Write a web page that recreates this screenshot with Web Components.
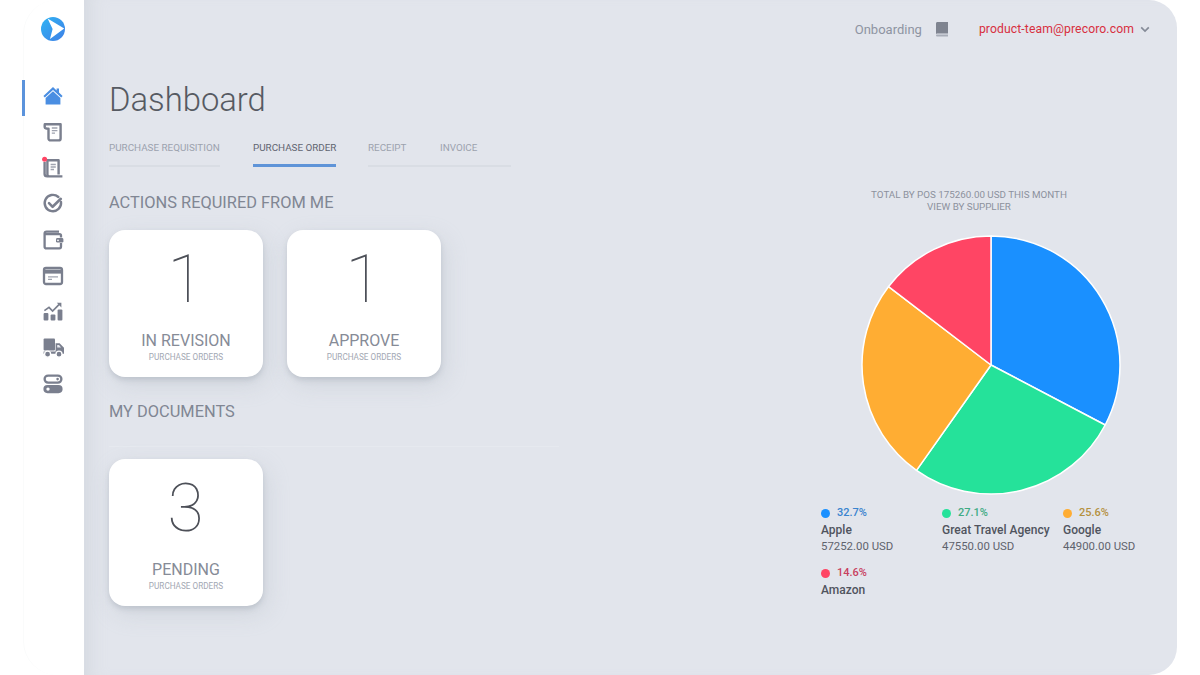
<!DOCTYPE html>
<html>
<head>
<meta charset="utf-8">
<title>Dashboard</title>
<style>
  html, body { margin: 0; height: 100%; background: #fff; overflow: hidden; }
  body { font-family: Roboto, "Liberation Sans", sans-serif; }
</style>
</head>
<body>
<app-shell>
  <side-nav slot="nav"></side-nav>
  <top-bar slot="top"></top-bar>
  <page-title slot="left">Dashboard</page-title>
  <tab-strip slot="left"></tab-strip>
  <section-title slot="left" style="margin-top:26px">ACTIONS REQUIRED FROM ME</section-title>
  <card-row slot="left" style="margin-top:17px">
    <stat-card count="1" label="IN REVISION" sub="PURCHASE ORDERS"></stat-card>
    <stat-card count="1" label="APPROVE" sub="PURCHASE ORDERS"></stat-card>
  </card-row>
  <section-title slot="left" style="margin-top:25px" ruled>MY DOCUMENTS</section-title>
  <card-row slot="left" style="margin-top:12px">
    <stat-card count="3" label="PENDING" sub="PURCHASE ORDERS"></stat-card>
  </card-row>
  <pie-chart slot="right"></pie-chart>
</app-shell>

<script>
class AppShell extends HTMLElement {
  constructor() {
    super();
    const shadow = this.attachShadow({mode: 'open'});
    shadow.innerHTML = `
    <style>
      :host { display: flex; width: 1177px; height: 675px; }
      .nav { flex: 0 0 84px; }
      .panel {
        flex: 1; height: 675px; background: #e2e5ec;
        border-radius: 0 28px 28px 0;
        box-shadow: inset 18px 0 18px -14px rgba(190,198,204,.42);
      }
      .body { display: grid; grid-template-columns: 712px 356px; padding-left: 25px; }
      .left, .right { display: flex; flex-direction: column; align-items: flex-start; }
    </style>
    <div class="nav"><slot name="nav"></slot></div>
    <div class="panel">
      <slot name="top"></slot>
      <div class="body">
        <div class="left"><slot name="left"></slot></div>
        <div class="right"><slot name="right"></slot></div>
      </div>
    </div>`;
  }
}

const ICONS = [
  `<path d="M10 1 0.4 10 1.8 11.5 10 3.9 18.2 11.5 19.6 10 16 6.6V2.4H13.6V4.4Z" fill="#4a8ee2"/><path d="M10 5.2 2.6 12V18.6H17.4V12Z" fill="#4a8ee2"/>`,
  `<g fill="none" stroke="#7a7f8e" stroke-width="2.4" stroke-linejoin="round"><path d="M1.8 2.2H17.6V16.4C17.6 17.6 16.7 18.4 15.5 18.4H7.6C6.4 18.4 5.5 17.6 5.5 16.4V6.6C5.5 6.6 2.2 6.8 1.8 5.4 1.5 4.2 1.8 2.2 1.8 2.2Z"/></g><path d="M8.8 6H14.4M8.8 8.6H14.4M8.8 11.2H12" stroke="#a0a4b0" stroke-width="1.3"/>`,
  `<g fill="none" stroke="#7a7f8e" stroke-width="2.4" stroke-linejoin="round"><path d="M5 18.4H19.4M1.6 4V16C1.6 17.4 2.8 18.4 4.2 18.4H6.4C5.2 18.4 4.4 17.4 4.4 16.4V2.2H15.6V16.4"/></g><path d="M7.6 6.5H12.8M7.6 9H12.8M7.6 11.5H11" stroke="#a0a4b0" stroke-width="1.3"/><circle cx="1.6" cy="1.2" r="2.5" fill="#ff4564"/>`,
  `<path d="M15.4 3A8.2 8.2 0 1 0 18 8" fill="none" stroke="#7a7f8e" stroke-width="2.4" stroke-linecap="round"/><path d="M6 9.2 9.6 12.8 17.8 4.8" fill="none" stroke="#7a7f8e" stroke-width="2.6" stroke-linecap="round" stroke-linejoin="round"/>`,
  `<path d="M16 1.6H3.6C2.6 1.6 1.6 2.4 1.6 3.6V16.4C1.6 17.6 2.6 18.4 3.6 18.4H16.4C17.4 18.4 18 17.6 18 16.6V13M18 7.6V5.6C18 4.8 17.4 4.2 16.6 4.2H2" fill="none" stroke="#7a7f8e" stroke-width="2.3"/><rect x="13" y="8" width="7.4" height="4.6" rx="1.4" fill="#7a7f8e"/><circle cx="15" cy="10.3" r="0.9" fill="#fff"/>`,
  `<rect x="1" y="2" width="18" height="16" rx="2" fill="none" stroke="#7a7f8e" stroke-width="2.3"/><rect x="1" y="3.6" width="18" height="4" fill="#7a7f8e"/><path d="M5 10.8H15M5 13.4H9" stroke="#a0a4b0" stroke-width="1.3"/>`,
  `<rect x="0.6" y="11" width="4.8" height="7.6" rx="1" fill="#7a7f8e"/><rect x="7.6" y="12.6" width="4.8" height="6" rx="1" fill="#7a7f8e"/><rect x="14.6" y="7.4" width="4.8" height="11.2" rx="1" fill="#7a7f8e"/><path d="M1.4 8.6 6 5.4 9.6 9 16.2 2.4" fill="none" stroke="#7a7f8e" stroke-width="1.7"/><path d="M13.8 0.8H18.4V5.4Z" fill="#7a7f8e"/>`,
  `<rect x="0.6" y="0.6" width="11.4" height="12" rx="1" fill="#7a7f8e"/><path d="M0.6 13.4H12.6V5.2H16.6L21 9.8V15.8H0.6Z" fill="#7a7f8e"/><path d="M14.2 7H16L18 9.6H14.2Z" fill="#e8eaf0"/><circle cx="4.6" cy="16.2" r="3" fill="#7a7f8e" stroke="#fff" stroke-width="1.3"/><circle cx="16" cy="16.2" r="3" fill="#7a7f8e" stroke="#fff" stroke-width="1.3"/>`,
  `<rect x="1.6" y="1.6" width="16.8" height="7" rx="3.5" fill="none" stroke="#7a7f8e" stroke-width="2.3"/><circle cx="14.6" cy="5.1" r="1.3" fill="#7a7f8e"/><rect x="0.4" y="11" width="19.2" height="8.2" rx="4.1" fill="#7a7f8e"/><circle cx="5" cy="15.1" r="1.7" fill="#fff"/>`
];

class SideNav extends HTMLElement {
  constructor() {
    super();
    const shadow = this.attachShadow({mode: 'open'});
    const items = ICONS.map((d, i) =>
      `<div class="item ${i === 0 ? 'active' : ''}"><svg width="20" height="20" viewBox="0 0 20 20" overflow="visible">${d}</svg></div>`).join('');
    shadow.innerHTML = `
    <style>
      :host { display: block; height: 675px; background: #fff; }
      .frame {
        margin-left: 23px; height: 675px; box-sizing: border-box; width: 61px;
        border-left: 1px solid #fafbfb; border-radius: 34px 0 0 34px;
        display: flex; flex-direction: column; align-items: center;
        padding-right: 2px;
      }
      .logo { margin-top: 17px; height: 24px; display: flex; }
      .list { margin-top: 37px; display: flex; flex-direction: column; width: 100%; }
      .item { height: 36px; display: flex; align-items: center; justify-content: center; position: relative; }
      .item.active::before {
        content: ''; position: absolute; left: -2px; top: 2px; width: 3px; height: 36px;
        background: #5b93dc;
      }
    </style>
    <div class="frame">
      <div class="logo">
        <svg width="24" height="24" viewBox="0 0 24 24">
          <defs><linearGradient id="lg" x1="0" y1="0" x2="1" y2="1">
            <stop offset="0" stop-color="#2fb4f4"/><stop offset="1" stop-color="#3f7fe6"/>
          </linearGradient></defs>
          <circle cx="12" cy="12" r="12" fill="url(#lg)"/>
          <path d="M6.6 1.4 23.2 11.4 9 22 11.6 12Z" fill="#fff"/>
        </svg>
      </div>
      <div class="list">${items}</div>
    </div>`;
  }
}

class TopBar extends HTMLElement {
  constructor() {
    super();
    const shadow = this.attachShadow({mode: 'open'});
    shadow.innerHTML = `
    <style>
      :host { display: flex; height: 58px; align-items: center; justify-content: flex-end; padding-right: 27px; }
      .onb { font-size: 13px; color: #8e94a2; }
      svg { display: block; }
      .book { margin: 0 30px 0 13px; }
      .mail { font-size: 12.2px; color: #d8303f; letter-spacing: .1px; }
      .chev { margin-left: 6px; }
    </style>
    <span class="onb">Onboarding</span>
    <svg class="book" width="14" height="15" viewBox="0 0 14 15">
      <path d="M1 1.5C1 .7 1.6 0 2.4 0H13V11.6H2.4C1.6 11.6 1 12 1 12.8Z" fill="#7f8490"/>
      <path d="M1 13.2C1 12.6 1.6 12.4 2.4 12.4H13V14.6H2.4C1.6 14.6 1 14 1 13.2Z" fill="#a8adb8"/>
    </svg>
    <span class="mail">product-team@precoro.com</span>
    <svg class="chev" width="10" height="7" viewBox="0 0 10 7"><path d="M1.2 1.4 5 5 8.8 1.4" fill="none" stroke="#858b98" stroke-width="1.7"/></svg>`;
  }
}

class PageTitle extends HTMLElement {
  constructor() {
    super();
    const shadow = this.attachShadow({mode: 'open'});
    shadow.innerHTML = `
    <style>
      :host { display: block; margin-top: 21px; font-size: 32.8px; line-height: 42px; font-weight: 300; color: #565a62; }
    </style>
    <slot></slot>`;
  }
}

class TabStrip extends HTMLElement {
  constructor() {
    super();
    const shadow = this.attachShadow({mode: 'open'});
    shadow.innerHTML = `
    <style>
      :host { display: flex; margin-top: 10px; height: 36px; }
      .tab {
        font-size: 9.85px; line-height: 34px; color: #9ca2ae; box-sizing: border-box; height: 36px;
        border-bottom: 2px solid #d9dde4; white-space: nowrap;
      }
      .a { width: 111px; margin-right: 33px; }
      .b { width: 83px; color: #5f6470; border-bottom: 3px solid #5f94d8; margin-right: 32px; }
      .c { width: 72px; }
      .d { width: 71px; }
    </style>
    <div class="tab a">PURCHASE REQUISITION</div>
    <div class="tab b">PURCHASE ORDER</div>
    <div class="tab c">RECEIPT</div>
    <div class="tab d">INVOICE</div>`;
  }
}

class SectionTitle extends HTMLElement {
  constructor() {
    super();
    const shadow = this.attachShadow({mode: 'open'});
    shadow.innerHTML = `
    <style>
      :host { display: block; font-size: 16.4px; line-height: 20px; color: #808693; }
      :host([ruled]) { width: 450px; padding-bottom: 24px; border-bottom: 1px solid #e6e9ef; }
    </style>
    <slot></slot>`;
  }
}

class CardRow extends HTMLElement {
  constructor() {
    super();
    const shadow = this.attachShadow({mode: 'open'});
    shadow.innerHTML = `
    <style>:host { display: flex; gap: 24px; }</style>
    <slot></slot>`;
  }
}

class StatCard extends HTMLElement {
  constructor() {
    super();
    const shadow = this.attachShadow({mode: 'open'});
    shadow.innerHTML = `
    <style>
      :host {
        display: flex; flex-direction: column; align-items: center;
        width: 154px; height: 147px; box-sizing: border-box; padding-top: 17px;
        background: #fff; border-radius: 16px;
        box-shadow: 0 3px 5px rgba(150,158,170,.35), 4px 8px 22px rgba(170,178,190,.3);
      }
      .num { font-size: 66px; line-height: 66px; font-weight: 100; color: #4d5058; margin-right: 1px; }
      .label { margin-top: 18px; font-size: 16px; line-height: 20px; color: #868b97; }
      .sub { font-size: 8.2px; line-height: 12px; color: #a3a8b3; }
    </style>
    <div class="num"></div>
    <div class="label"></div>
    <div class="sub"></div>`;
    shadow.querySelector('.num').textContent = this.getAttribute('count');
    shadow.querySelector('.label').textContent = this.getAttribute('label');
    shadow.querySelector('.sub').textContent = this.getAttribute('sub');
  }
}

const SLICES = [
  {pct: 32.7, color: '#1a90ff', text: '#3a84cf', name: 'Apple', value: '57252.00 USD'},
  {pct: 27.1, color: '#25e29a', text: '#3fab84', name: 'Great Travel Agency', value: '47550.00 USD'},
  {pct: 25.6, color: '#ffad33', text: '#b5913f', name: 'Google', value: '44900.00 USD'},
  {pct: 14.6, color: '#ff4564', text: '#c8405f', name: 'Amazon', value: ''}
];

class PieChart extends HTMLElement {
  constructor() {
    super();
    const shadow = this.attachShadow({mode: 'open'});
    let start = 0;
    let paths = '';
    SLICES.forEach(s => {
      const end = start + s.pct;
      const p = (v) => {
        const a = v / 100 * 2 * Math.PI;
        return `${(130 + 129 * Math.sin(a)).toFixed(2)} ${(130 - 129 * Math.cos(a)).toFixed(2)}`;
      };
      paths += `<path d="M130 130L${p(start)}A129 129 0 ${s.pct > 50 ? 1 : 0} 1 ${p(end)}Z" fill="${s.color}" stroke="#fff" stroke-width="1.5" stroke-linejoin="round"/>`;
      start = end;
    });
    const legend = SLICES.map(s => `
      <div class="entry">
        <div class="pct" style="color:${s.text}"><i style="background:${s.color}"></i>${s.pct}%</div>
        <div class="name">${s.name}</div>
        ${s.value ? `<div class="value">${s.value}</div>` : ''}
      </div>`).join('');
    shadow.innerHTML = `
    <style>
      :host { display: block; padding-top: 131px; }
      .title { width: 296px; text-align: center; font-size: 9.8px; line-height: 12px; color: #8c919d; }
      svg { display: block; margin: 21.5px 0 0 39.5px; }
      .legend { display: grid; grid-template-columns: repeat(3, 121px); row-gap: 11px; margin-top: 11.5px; }
      .entry { height: 49px; }
      .pct { display: flex; align-items: center; font-size: 11px; line-height: 14px; font-weight: 500; }
      i { width: 9px; height: 9px; border-radius: 50%; margin-right: 7px; }
      .name { margin-top: 3px; font-size: 12px; line-height: 14px; font-weight: 500; color: #50545e; white-space: nowrap; }
      .value { margin-top: 1px; font-size: 11.4px; line-height: 16px; color: #5f636d; }
    </style>
    <div class="title">TOTAL BY POS 175260.00 USD THIS MONTH<br>VIEW BY SUPPLIER</div>
    <svg width="260" height="260" viewBox="0 0 260 260">${paths}</svg>
    <div class="legend">${legend}</div>`;
  }
}

customElements.define('app-shell', AppShell);
customElements.define('side-nav', SideNav);
customElements.define('top-bar', TopBar);
customElements.define('page-title', PageTitle);
customElements.define('tab-strip', TabStrip);
customElements.define('section-title', SectionTitle);
customElements.define('card-row', CardRow);
customElements.define('stat-card', StatCard);
customElements.define('pie-chart', PieChart);
</script>
</body>
</html>
